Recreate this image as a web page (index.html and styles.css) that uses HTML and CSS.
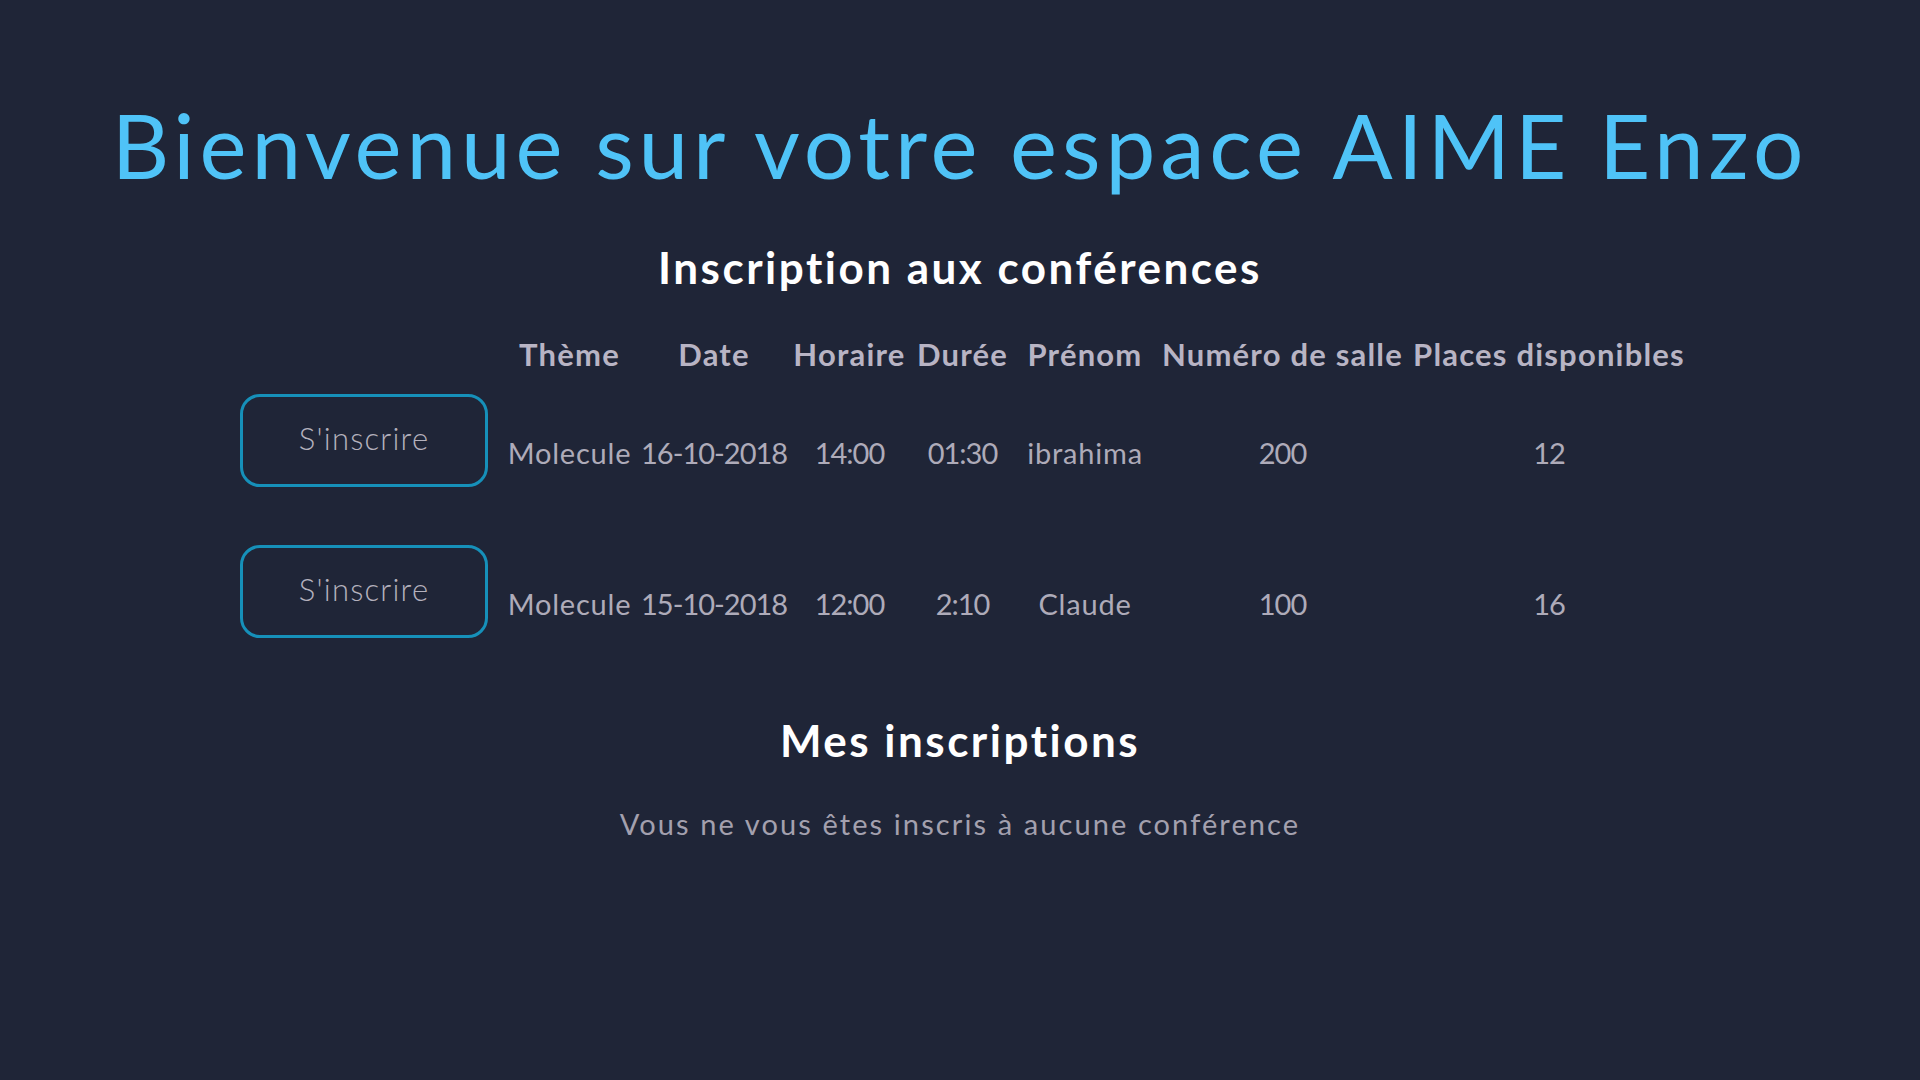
FILE: index.html
```html
<!DOCTYPE html>
<html lang="fr">
<head>
<meta charset="utf-8">
<title>Espace AIME</title>
<link rel="stylesheet" href="styles.css">
</head>
<body>
<main class="page">
  <h1 class="title">Bienvenue sur votre espace AIME Enzo</h1>
  <h2 class="section-title section-title--first">Inscription aux conférences</h2>
  <div class="conf-table">
    <div class="conf-row conf-row--head">
      <div class="cell"></div>
      <div class="cell">Thème</div>
      <div class="cell">Date</div>
      <div class="cell">Horaire</div>
      <div class="cell">Durée</div>
      <div class="cell">Prénom</div>
      <div class="cell">Numéro de salle</div>
      <div class="cell">Places disponibles</div>
    </div>
    <div class="conf-row">
      <div class="cell cell--btn"><button class="btn">S'inscrire</button></div>
      <div class="cell">Molecule</div>
      <div class="cell cell--num">16-10-2018</div>
      <div class="cell cell--num">14:00</div>
      <div class="cell cell--num">01:30</div>
      <div class="cell">ibrahima</div>
      <div class="cell cell--num">200</div>
      <div class="cell cell--num">12</div>
    </div>
    <div class="conf-row">
      <div class="cell cell--btn"><button class="btn">S'inscrire</button></div>
      <div class="cell">Molecule</div>
      <div class="cell cell--num">15-10-2018</div>
      <div class="cell cell--num">12:00</div>
      <div class="cell cell--num">2:10</div>
      <div class="cell">Claude</div>
      <div class="cell cell--num">100</div>
      <div class="cell cell--num">16</div>
    </div>
  </div>
  <h2 class="section-title section-title--second">Mes inscriptions</h2>
  <p class="empty">Vous ne vous êtes inscris à aucune conférence</p>
</main>
</body>
</html>
```

FILE: styles.css
```css
html, body {
  margin: 0;
  padding: 0;
  background: #1f2537;
}
body {
  font-family: "Lato", "Open Sans", sans-serif;
  min-height: 1080px;
}
.page {
  padding-top: 93px;
  display: flex;
  flex-direction: column;
  align-items: center;
}
.title {
  margin: 0;
  font-size: 89px;
  line-height: 104px;
  font-weight: 400;
  color: #4fc3f7;
  letter-spacing: 4.9px;
  text-align: center;
}
.section-title {
  margin: 0;
  font-size: 44px;
  line-height: 50px;
  font-weight: 700;
  color: #ffffff;
  letter-spacing: 2.5px;
  text-align: center;
}
.section-title--first {
  margin-top: 45px;
}
.section-title--second {
  margin-top: 77px;
}
.conf-table {
  margin-top: 44px;
  display: flex;
  flex-direction: column;
  gap: 58px;
}
.conf-table .conf-row--head + .conf-row {
  margin-top: -37px;
}
.conf-row {
  display: grid;
  grid-template-columns: 268px 143px 146px 125px 101px 144px 251px 282px;
  align-items: end;
}
.cell {
  text-align: center;
  font-size: 29px;
  line-height: 35px;
  color: #aeabb9;
  padding-bottom: 17px;
  letter-spacing: 0.8px;
  white-space: nowrap;
}
.cell--num {
  letter-spacing: -1px;
}
.conf-row--head .cell {
  font-size: 31px;
  line-height: 37px;
  font-weight: 700;
  color: #b8b4c4;
  letter-spacing: 1.2px;
  padding-bottom: 0;
}
.cell--btn {
  padding-bottom: 0;
  display: flex;
  justify-content: center;
}
.btn {
  width: 248px;
  height: 93px;
  box-sizing: border-box;
  background: transparent;
  border: 3px solid #1690b9;
  border-radius: 20px;
  color: #b4b1bd;
  font-family: "Lato", "Open Sans", sans-serif;
  font-size: 31px;
  font-weight: 300;
  letter-spacing: 1.2px;
  padding: 0 0 6px;
  cursor: pointer;
}
.empty {
  margin: 41px 0 0;
  font-size: 29px;
  line-height: 35px;
  color: #a3a0ae;
  letter-spacing: 2.1px;
  text-align: center;
}
```
